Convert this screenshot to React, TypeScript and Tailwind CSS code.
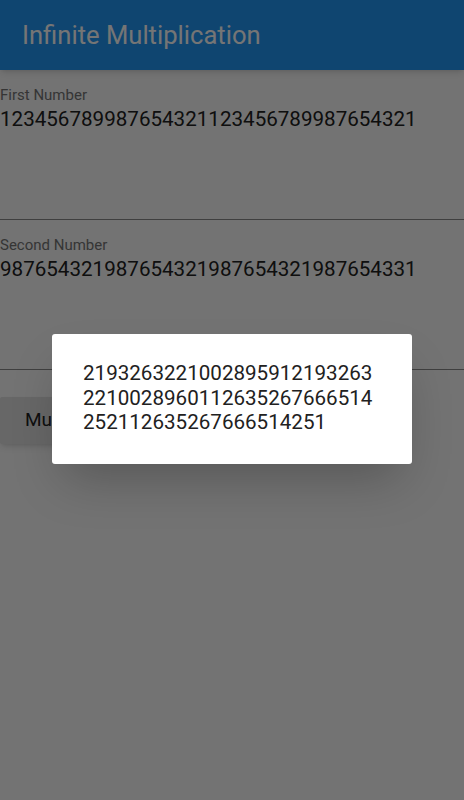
import React from 'react';

const fields = [
  { label: 'First Number', value: '123456789987654321123456789987654321' },
  { label: 'Second Number', value: '987654321987654321987654321987654331' },
];

const result =
  '2193263221002895912193263' + '2210028960112635267666514' + '252112635267666514251';

export default function App() {
  return (
    <div className="relative h-[800px] w-[464px] overflow-hidden bg-[#fafafa] font-['Roboto',sans-serif]">
      {/* App bar */}
      <header className="flex h-[70px] items-center bg-[#2196f3] px-[22px] shadow-md">
        <h1 className="text-[25.6px] text-white">Infinite Multiplication</h1>
      </header>

      {/* Inputs */}
      {fields.map((f) => (
        <div key={f.label} className="h-[150px] border-b border-[#8a8a8a] pt-[17px]">
          <div className="text-[15px] leading-[16px] text-[#757575]">{f.label}</div>
          <div className="mt-[3px] text-[20.6px] leading-[26px] text-[#212121]">{f.value}</div>
        </div>
      ))}

      <div className="mt-[27px]">
        <button className="h-[47px] w-[130px] rounded-[2px] bg-[#e0e0e0] pl-[25px] text-left text-[19px] text-[#212121] shadow-md">
          Multiply
        </button>
      </div>

      {/* Dim overlay */}
      <div className="absolute inset-0 bg-black/[0.54]" />

      {/* Result dialog */}
      <div className="absolute left-[52px] top-[334px] h-[130px] w-[360px] rounded-[3px] bg-white pl-[31px] pr-[35px] pt-[27px] shadow-2xl">
        <p className="break-all text-[20.6px] leading-[24.5px] text-[#212121]">{result}</p>
      </div>
    </div>
  );
}
